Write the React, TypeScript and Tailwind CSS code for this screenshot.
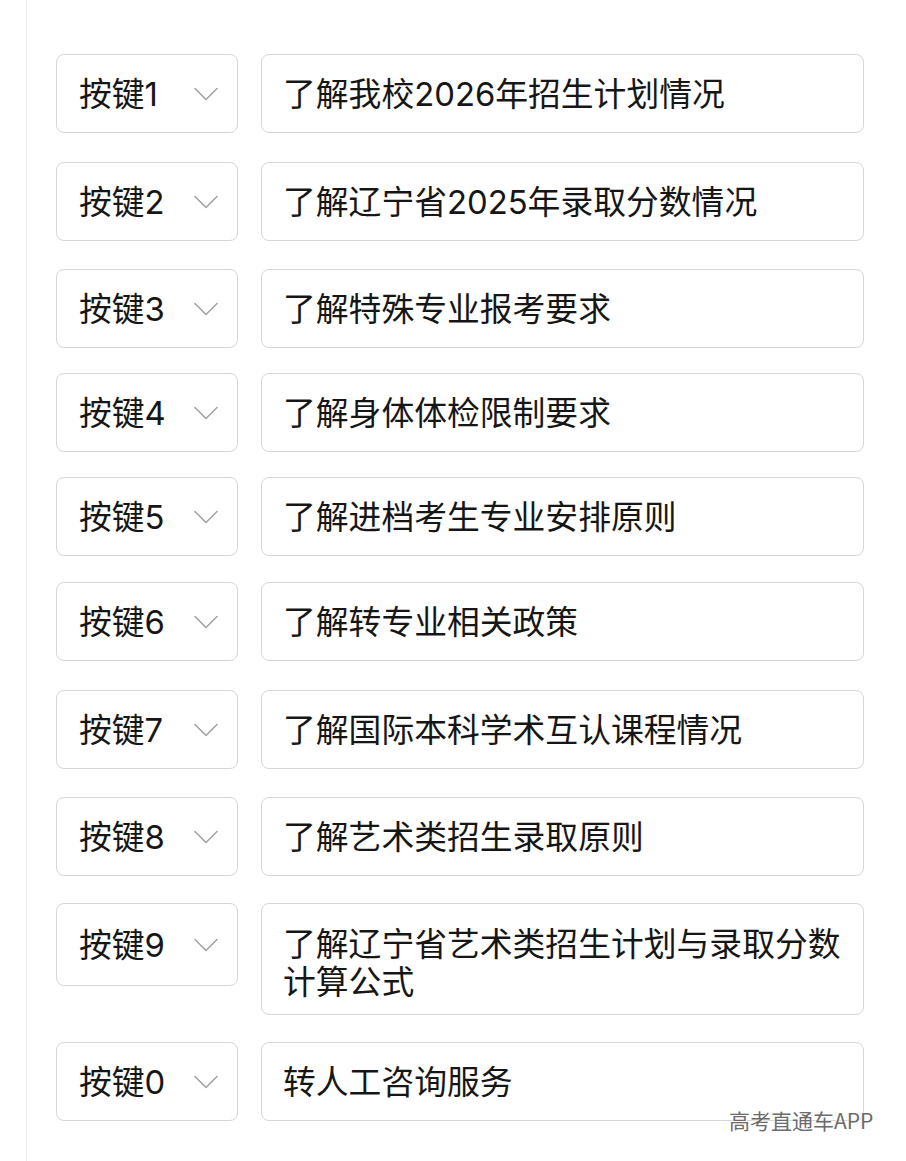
import React from 'react'

const rows = [
  { key: '1', label: '了解我校2026年招生计划情况', gap: 'mt-0' },
  { key: '2', label: '了解辽宁省2025年录取分数情况', gap: 'mt-[29px]' },
  { key: '3', label: '了解特殊专业报考要求', gap: 'mt-[28px]' },
  { key: '4', label: '了解身体体检限制要求', gap: 'mt-[25px]' },
  { key: '5', label: '了解进档考生专业安排原则', gap: 'mt-[25px]' },
  { key: '6', label: '了解转专业相关政策', gap: 'mt-[26px]' },
  { key: '7', label: '了解国际本科学术互认课程情况', gap: 'mt-[29px]' },
  { key: '8', label: '了解艺术类招生录取原则', gap: 'mt-[28px]' },
  { key: '9', label: '了解辽宁省艺术类招生计划与录取分数计算公式', gap: 'mt-[27px]', tall: true },
  { key: '0', label: '转人工咨询服务', gap: 'mt-[27px]' },
]

const Chevron = () => (
  <svg width="24" height="14" viewBox="0 0 24 14" fill="none" className="shrink-0">
    <polyline points="1,1.5 12,12.5 23,1.5" stroke="#a0a0a0" strokeWidth="1.5" strokeLinecap="round" strokeLinejoin="round" />
  </svg>
)

export default function App() {
  return (
    <div
      className="relative min-h-screen w-[906px] bg-white text-[#161616] overflow-hidden"
      style={{ fontFamily: 'Inter, "Noto Sans CJK SC", sans-serif' }}
    >
      <div className="ml-[26px] min-h-[1161px] border-l border-[#ececec] pl-[29px] pt-[54px]">
        <div className="flex flex-col">
          {rows.map((row) => (
            <div key={row.key} className={`flex items-start gap-[23px] ${row.gap}`}>
              {/* key selector */}
              <div
                className={`flex w-[182px] items-center justify-between rounded-[8px] border border-[#d6d6d6] pl-[22px] pr-[19px] ${
                  row.tall ? 'h-[83px]' : 'h-[79px]'
                }`}
              >
                <span className="text-[32.8px] leading-[38px]">按键{row.key}</span>
                <Chevron />
              </div>

              {/* option text */}
              <div
                className={`flex w-[603px] items-center rounded-[8px] border border-[#d6d6d6] pl-[21px] pr-[10px] ${
                  row.tall ? 'pt-[21px] pb-[13px]' : 'h-[79px]'
                }`}
              >
                <span className="text-[32.8px] leading-[38px]">{row.label}</span>
              </div>
            </div>
          ))}
        </div>
      </div>

      {/* watermark */}
      <div
        className="absolute left-[729px] top-[1106px] text-[21px] leading-[28px] text-[#6b6b6b]"
        style={{ fontFamily: '"Noto Sans CJK SC", sans-serif', textShadow: '0 0 2px #fff, 0 0 2px #fff' }}
      >
        高考直通车APP
      </div>
    </div>
  )
}
